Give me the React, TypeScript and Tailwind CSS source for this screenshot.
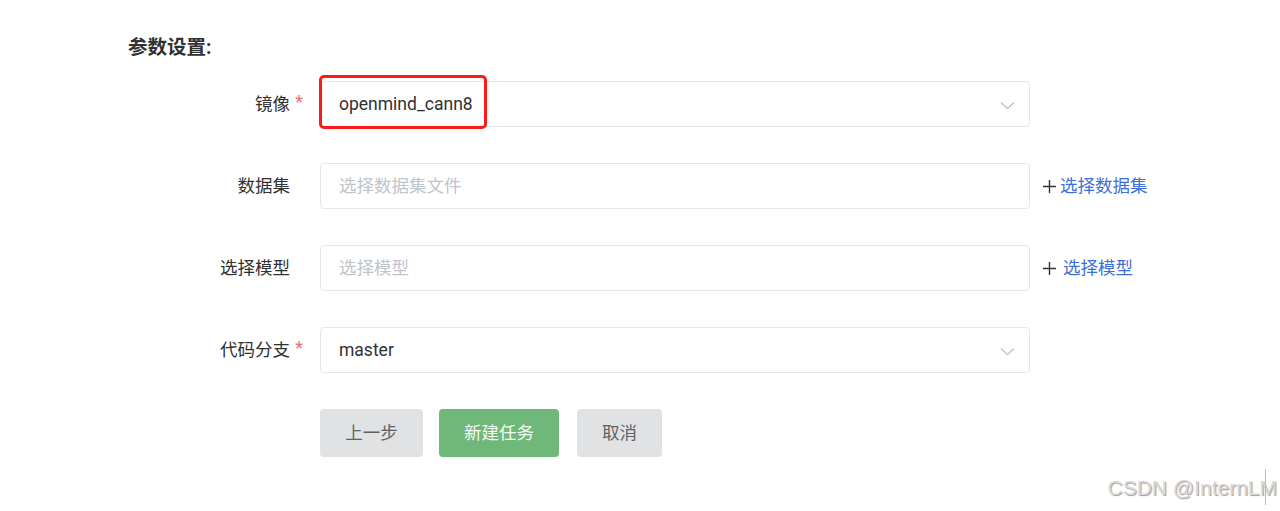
const FONT = { fontFamily: 'Roboto, "Noto Sans CJK SC", sans-serif' }

function Label({ text, required }: { text: string; required?: boolean }) {
  return (
    <div className="relative flex h-[46px] w-[192px] shrink-0 items-center justify-end pr-[30px] text-[17.5px] text-[#303133]">
      {text}
      {required && (
        <span className="absolute right-[17px] top-[12px] text-[18px] leading-none text-[#f56c6c]">*</span>
      )}
    </div>
  )
}

function Chevron() {
  return (
    <svg className="absolute right-[14px] top-[19px]" width="15" height="9" viewBox="0 0 15 9" fill="none">
      <path d="M1 1.5 7.5 7.5 14 1.5" stroke="#c0c4cc" strokeWidth="1.3" />
    </svg>
  )
}

function Field({
  value,
  placeholder,
  select,
  children,
}: {
  value?: string
  placeholder?: string
  select?: boolean
  children?: React.ReactNode
}) {
  return (
    <div className="relative flex h-[46px] w-[710px] items-center rounded-[4px] border border-[#e4e7ed] bg-white px-[18px]">
      {value ? (
        <span className="text-[17.5px] text-[#303133]">{value}</span>
      ) : (
        <span className="text-[17.5px] text-[#c0c4cc]">{placeholder}</span>
      )}
      {select && <Chevron />}
      {children}
    </div>
  )
}

function AddLink({ text, spaced }: { text: string; spaced?: boolean }) {
  return (
    <div className="ml-[13px] flex items-center text-[17.5px] text-[#3e6fd8]">
      <svg width="13" height="13" viewBox="0 0 13 13" fill="none">
        <path d="M6.5 0v13M0 6.5h13" stroke="#333" strokeWidth="1.4" />
      </svg>
      <span className={spaced ? 'ml-[7px]' : 'ml-[4px]'}>{text}</span>
    </div>
  )
}

export default function App() {
  return (
    <div className="relative h-[511px] w-full overflow-hidden bg-white" style={FONT}>
      <div className="pl-[128px] pt-[34px]">
        <h2 className="text-[19.5px] font-bold leading-[28px] text-[#303133]">参数设置:</h2>
      </div>

      <div className="mt-[19px] flex flex-col gap-[36px] pl-[128px]">
        <div className="flex h-[46px] items-center">
          <Label text="镜像" required />
          <Field value="openmind_cann8" select>
            <div className="pointer-events-none absolute left-[-2px] top-[-7px] h-[54px] w-[168px] rounded-[5px] border-[3px] border-[#ff1a1a]" />
          </Field>
        </div>
        <div className="flex h-[46px] items-center">
          <Label text="数据集" />
          <Field placeholder="选择数据集文件" />
          <AddLink text="选择数据集" />
        </div>
        <div className="flex h-[46px] items-center">
          <Label text="选择模型" />
          <Field placeholder="选择模型" />
          <AddLink text="选择模型" spaced />
        </div>
        <div className="flex h-[46px] items-center">
          <Label text="代码分支" required />
          <Field value="master" select />
        </div>
      </div>

      <div className="mt-[36px] flex gap-[16px] pl-[320px]">
        <button className="h-[48px] w-[103px] rounded-[4px] bg-[#e1e2e4] text-[17.5px] text-[#606266]">上一步</button>
        <button className="h-[48px] w-[120px] rounded-[4px] bg-[#70b77a] text-[17.5px] text-[#f4fbf4]">新建任务</button>
        <button className="ml-[2px] h-[48px] w-[85px] rounded-[4px] bg-[#e1e2e4] text-[17.5px] text-[#606266]">取消</button>
      </div>

      <div
        className="absolute bottom-[8px] right-[3px] text-[21px] text-[#d9d9d9]"
        style={{ fontFamily: '"Liberation Sans", Arial, sans-serif', textShadow: '1px 1px 1px #9a9a9a' }}
      >
        CSDN @InternLM
      </div>
      <div className="absolute bottom-[6px] right-[14px] h-[36px] w-px bg-[#bbb]" />
    </div>
  )
}
